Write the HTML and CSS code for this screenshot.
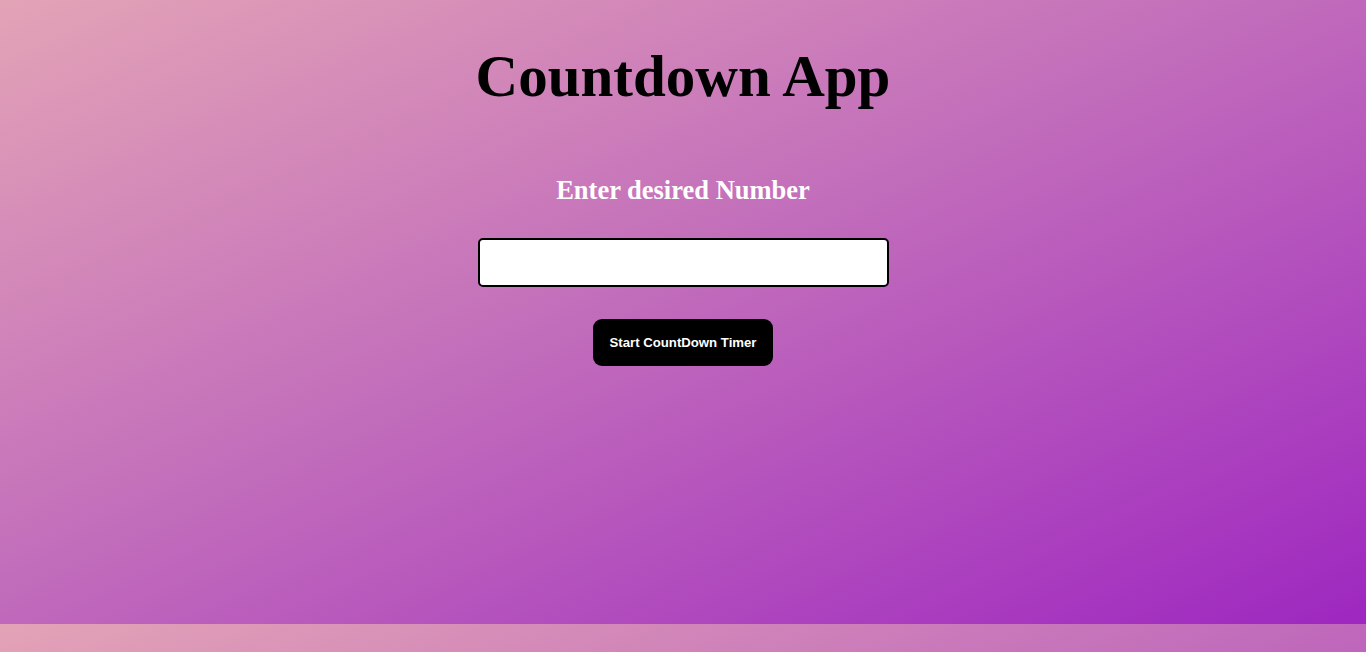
FILE: index.html
```html
<!DOCTYPE html>
<html lang="en">
<head>
<meta charset="utf-8">
<title>Countdown App</title>
<link rel="stylesheet" href="styles.css">
</head>
<body>
<main class="app">
  <h1 class="title">Countdown App</h1>
  <h3 class="label">Enter desired Number</h3>
  <input class="number-input" type="number">
  <button class="start-btn">Start CountDown Timer</button>
</main>
</body>
</html>
```
FILE: styles.css
```css
html {
  background: linear-gradient(to bottom right, #e3a3b6 0%, #c36fbb 45%, #9e27c0 100%);
  background-size: 100% 624px;
  background-repeat: repeat-y;
}
body {
  margin: 0;
  height: 624px;
  font-family: "Liberation Serif", serif;
}
.app {
  display: flex;
  flex-direction: column;
  align-items: center;
  padding-top: 38px;
}
.title {
  margin: 0;
  font-size: 59px;
  font-weight: bold;
  color: #000;
  line-height: 76px;
}
.label {
  margin: 60px 0 0;
  font-size: 26.5px;
  font-weight: bold;
  color: #fff;
  line-height: 32px;
}
.number-input {
  margin-top: 32px;
  width: 411px;
  height: 49px;
  box-sizing: border-box;
  border: 2px solid #000;
  border-radius: 5px;
  background: #fff;
  outline: none;
}
.start-btn {
  margin-top: 32px;
  width: 180px;
  height: 47px;
  border: none;
  border-radius: 9px;
  background: #000;
  color: #fff;
  font-family: "Liberation Sans", Arial, sans-serif;
  font-weight: bold;
  font-size: 13.2px;
  cursor: pointer;
}
```
